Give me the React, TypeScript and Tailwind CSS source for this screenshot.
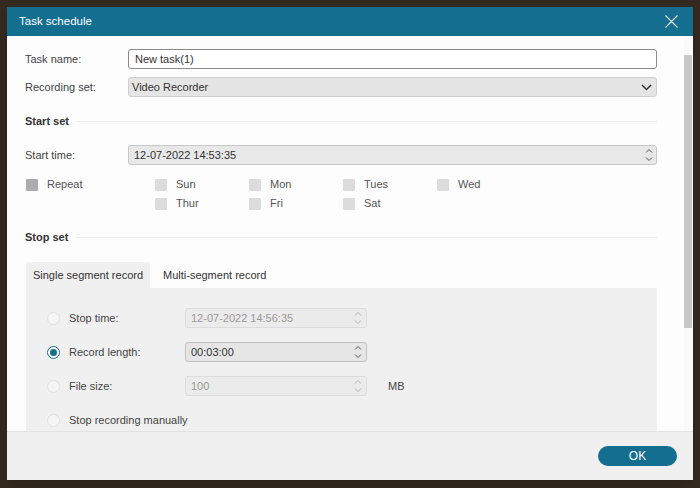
import React from "react"

const FONT = "font-['Liberation_Sans',Arial,sans-serif]"

const Spinner = ({ disabled }: { disabled?: boolean }) => (
  <svg width="8" height="14" viewBox="0 0 8 14" className={disabled ? "text-[#b5b5b5]" : "text-[#555]"}>
    <path d="M1 4.5 L4 1.5 L7 4.5" fill="none" stroke="currentColor" strokeWidth="1" />
    <path d="M1 9.5 L4 12.5 L7 9.5" fill="none" stroke="currentColor" strokeWidth="1" />
  </svg>
)

const Check = ({ label, dark }: { label: string; dark?: boolean }) => (
  <div className="flex items-center gap-[9px] h-[19px]">
    <span className={`w-[12px] h-[12px] rounded-[1px] ${dark ? "bg-[#acacac]" : "bg-[#dcdcdc]"}`} />
    <span className="text-[#555]">{label}</span>
  </div>
)

const Radio = ({ checked }: { checked?: boolean }) =>
  checked ? (
    <span className="w-[13px] h-[13px] rounded-full border-[1.5px] border-[#146e8f] bg-white flex items-center justify-center">
      <span className="w-[7px] h-[7px] rounded-full bg-[#146e8f]" />
    </span>
  ) : (
    <span className="w-[13px] h-[13px] rounded-full border border-[#e0e0e0] bg-[#f5f5f5]" />
  )

const SectionTitle = ({ title }: { title: string }) => (
  <div className="flex items-center gap-[8px] h-[16px]">
    <span className="font-bold text-[#333]">{title}</span>
    <span className="flex-1 h-px bg-[#ececec]" />
  </div>
)

const StopRow = ({
  label,
  value,
  checked,
  disabled,
  unit,
}: {
  label: string
  value?: string
  checked?: boolean
  disabled?: boolean
  unit?: string
}) => (
  <div className="flex items-center h-[20px]">
    <div className="w-[22px] shrink-0 flex justify-start">
      <Radio checked={checked} />
    </div>
    <span className="min-w-[116px] whitespace-nowrap text-[#444]">{label}</span>
    {value !== undefined && (
      <div
        className={`w-[182px] h-[20px] rounded-[3px] border flex items-center justify-between pl-[5px] pr-[4px] ${
          disabled ? "bg-[#ebebeb] border-[#dcdcdc] text-[#999]" : "bg-[#e6e6e6] border-[#c2c2c2] text-[#333]"
        }`}
      >
        <span>{value}</span>
        <Spinner disabled={disabled} />
      </div>
    )}
    {unit && <span className="ml-[21px] text-[#444]">{unit}</span>}
  </div>
)

export default function App() {
  return (
    <div className={`w-[700px] h-[488px] bg-[#33291f] p-[7px] ${FONT} text-[11px]`}>
      <div className="w-[686px] h-[473px] flex flex-col bg-[#fdfdfd] shadow-lg">
        <header className="h-[29px] shrink-0 bg-[#146e8f] flex items-center justify-between pl-[12px] pr-[15px]">
          <span className="text-white text-[11.5px]">Task schedule</span>
          <svg width="13" height="13" viewBox="0 0 13 13">
            <path d="M0.5 0.5 L12.5 12.5 M12.5 0.5 L0.5 12.5" stroke="#e6f0f4" strokeWidth="1.1" />
          </svg>
        </header>

        <div className="flex-1 flex overflow-hidden">
          <div className="flex-1 pl-[18px] pr-[27px] pt-[13px] flex flex-col">
            <div className="flex items-center h-[20px]">
              <span className="w-[103px] text-[#444]">Task name:</span>
              <div className="flex-1 h-[20px] bg-white border border-[#8a8a8a] rounded-[3px] flex items-center pl-[6px] text-[#333]">
                New task(1)
              </div>
            </div>
            <div className="flex items-center h-[20px] mt-[8px]">
              <span className="w-[103px] text-[#444]">Recording set:</span>
              <div className="flex-1 h-[20px] bg-[#e5e5e5] border border-[#d0d0d0] rounded-[3px] flex items-center justify-between pl-[3px] pr-[4px] text-[#333]">
                <span>Video Recorder</span>
                <svg width="11" height="7" viewBox="0 0 11 7">
                  <path d="M1 1 L5.5 5.5 L10 1" fill="none" stroke="#333" strokeWidth="1.5" />
                </svg>
              </div>
            </div>

            <div className="mt-[16px]">
              <SectionTitle title="Start set" />
            </div>

            <div className="flex items-center h-[20px] mt-[16px]">
              <span className="w-[103px] text-[#444]">Start time:</span>
              <div className="flex-1 h-[20px] bg-[#e8e8e8] border border-[#c8c8c8] rounded-[3px] flex items-center justify-between pl-[5px] pr-[3px] text-[#333]">
                <span>12-07-2022 14:53:35</span>
                <Spinner />
              </div>
            </div>

            <div className="flex mt-[10px] ml-px">
              <div className="w-[129px]">
                <Check label="Repeat" dark />
              </div>
              <div className="grid grid-cols-[94px_94px_94px_94px]">
                <Check label="Sun" />
                <Check label="Mon" />
                <Check label="Tues" />
                <Check label="Wed" />
                <Check label="Thur" />
                <Check label="Fri" />
                <Check label="Sat" />
              </div>
            </div>

            <div className="mt-[16px]">
              <SectionTitle title="Stop set" />
            </div>

            <div className="ml-px mt-[17px] flex">
              <div className="w-[124px] h-[26px] bg-[#f0f0f0] rounded-t-[4px] flex items-center justify-center text-[#333]">
                Single segment record
              </div>
              <div className="h-[26px] flex items-center pl-[13px] text-[#333]">Multi-segment record</div>
            </div>
            <div className="ml-px flex-1 bg-[#f0f0f0] pl-[21px] pt-[20px] flex flex-col gap-[14px]">
              <StopRow label="Stop time:" value="12-07-2022 14:56:35" disabled />
              <StopRow label="Record length:" value="00:03:00" checked />
              <StopRow label="File size:" value="100" disabled unit="MB" />
              <StopRow label="Stop recording manually" />
            </div>
          </div>

          <div className="w-[9px] shrink-0 bg-[#fafafa] pt-[19px]">
            <div className="w-[8px] h-[273px] bg-[#c8c8c8]" />
          </div>
        </div>

        <footer className="h-[49px] shrink-0 bg-[#f0f0f0] border-t border-[#e2e2e2] flex items-center justify-end pr-[16px]">
          <button className="w-[79px] h-[20px] rounded-full bg-[#146e8f] text-white text-[12px] leading-none">
            OK
          </button>
        </footer>
      </div>
    </div>
  )
}
